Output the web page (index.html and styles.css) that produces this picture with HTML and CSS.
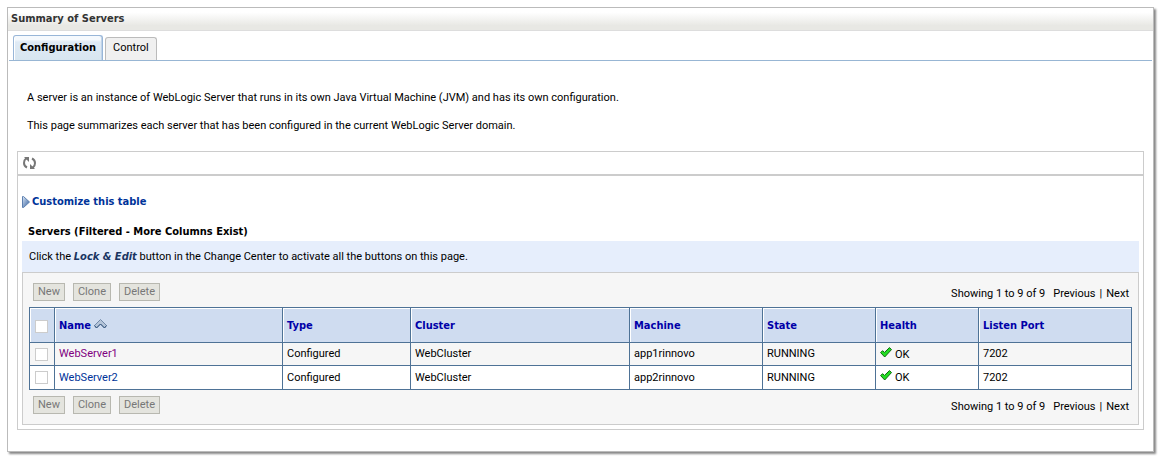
FILE: index.html
```html
<!DOCTYPE html>
<html lang="en">

<head>
    <meta charset="UTF-8">
    <meta name="viewport" content="width=device-width, initial-scale=1.0">
    <title>Summary of Servers</title>
    <link rel="stylesheet" href="styles.css">
</head>

<body>

    <div class="panel">
        <h1 class="panel-title">Summary of Servers</h1>

        <nav class="tabs">
            <a href="#" class="tab active">Configuration</a>
            <a href="#" class="tab">Control</a>
        </nav>

        <div class="intro">
            <p>A server is an instance of WebLogic Server that runs in its own Java Virtual Machine (JVM) and has its own configuration.</p>
            <p>This page summarizes each server that has been configured in the current WebLogic Server domain.</p>
        </div>

        <div class="content">
            <div class="toolbar">
                <button class="refresh" aria-label="Refresh">
                    <svg width="13" height="12" viewBox="0 0 13 12">
                        <path d="M4.500 1.500H3Q1 3 1 6T4 10.500" fill="none" stroke="#777" stroke-width="2" />
                        <path d="M1 0h5v5z" fill="#777" />
                        <path d="M8.500 10.500h1.500Q12 9 12 6T9 1.500" fill="none" stroke="#777" stroke-width="2" />
                        <path d="M12 12H7V7z" fill="#777" />
                    </svg>
                </button>
            </div>

            <div class="table-area">
                <a href="#" class="customize">
                    <svg width="8" height="12" viewBox="0 0 8 12">
                        <defs>
                            <linearGradient id="arrowFill" x1="0" y1="0" x2="1" y2="1">
                                <stop offset="0" stop-color="#dce8f6" />
                                <stop offset="1" stop-color="#2f5b9c" />
                            </linearGradient>
                        </defs>
                        <path d="M.5.5h1l6 5.500-6 5.500h-1z" fill="url(#arrowFill)" stroke="#5d80b0" />
                    </svg>
                    Customize this table
                </a>

                <h2 class="table-title">Servers (Filtered - More Columns Exist)</h2>
                <p class="hint">Click the <em>Lock &amp; Edit</em> button in the Change Center to activate all the buttons on this page.</p>

                <div class="table-box">
                    <div class="controls">
                        <div class="buttons">
                            <button disabled>New</button>
                            <button disabled>Clone</button>
                            <button disabled>Delete</button>
                        </div>
                        <div class="paging">
                            <span>Showing 1 to 9 of 9</span>
                            <span class="prev">Previous</span>
                            <span>|</span>
                            <span>Next</span>
                        </div>
                    </div>

                    <table class="servers">
                        <colgroup>
                            <col class="col-check">
                            <col class="col-name">
                            <col class="col-type">
                            <col class="col-cluster">
                            <col class="col-machine">
                            <col class="col-state">
                            <col class="col-health">
                            <col class="col-port">
                        </colgroup>
                        <thead>
                            <tr>
                                <th class="check"><input type="checkbox" aria-label="Select all servers"></th>
                                <th>Name
                                    <svg class="sort" width="13" height="10" viewBox="0 0 13 10">
                                        <path d="M.5 6.500l6-6 6 6-2 2.500-4-4-4 4z" fill="#b4c4d8" stroke="#7189a8" />
                                        <path d="M.5 6.500l2 2.500 4-4 4 4 2-2.500" fill="none" stroke="#33557f" />
                                    </svg>
                                </th>
                                <th>Type</th>
                                <th>Cluster</th>
                                <th>Machine</th>
                                <th>State</th>
                                <th>Health</th>
                                <th>Listen Port</th>
                            </tr>
                        </thead>
                        <tbody>
                            <tr>
                                <td class="check"><input type="checkbox" aria-label="Select WebServer1"></td>
                                <td><a href="#" class="seen">WebServer1</a></td>
                                <td>Configured</td>
                                <td>WebCluster</td>
                                <td>app1rinnovo</td>
                                <td>RUNNING</td>
                                <td><svg class="ok" width="12" height="11" viewBox="0 0 12 11">
                                        <path d="M.6 5.600l1.900-1.900 2 1.700L9.500.6l2 2L4.700 10z" fill="#22dd22" stroke="#0b6b0b" />
                                    </svg>OK</td>
                                <td>7202</td>
                            </tr>
                            <tr>
                                <td class="check"><input type="checkbox" aria-label="Select WebServer2"></td>
                                <td><a href="#">WebServer2</a></td>
                                <td>Configured</td>
                                <td>WebCluster</td>
                                <td>app2rinnovo</td>
                                <td>RUNNING</td>
                                <td><svg class="ok" width="12" height="11" viewBox="0 0 12 11">
                                        <path d="M.6 5.600l1.900-1.900 2 1.700L9.500.6l2 2L4.700 10z" fill="#22dd22" stroke="#0b6b0b" />
                                    </svg>OK</td>
                                <td>7202</td>
                            </tr>
                        </tbody>
                    </table>

                    <div class="controls bottom">
                        <div class="buttons">
                            <button disabled>New</button>
                            <button disabled>Clone</button>
                            <button disabled>Delete</button>
                        </div>
                        <div class="paging">
                            <span>Showing 1 to 9 of 9</span>
                            <span class="prev">Previous</span>
                            <span>|</span>
                            <span>Next</span>
                        </div>
                    </div>
                </div>
            </div>
        </div>
    </div>

</body>

</html>
```
FILE: styles.css
```css
* {
    margin: 0;
    padding: 0;
    box-sizing: border-box;
}

body {
    padding: 7px 5px 5px 7px;
    background: #fff;
    color: #000;
    font-family: Tahoma, Roboto, sans-serif;
    font-size: 11px;
    line-height: 14px;
}

h1,
h2,
th,
em,
.customize,
.tab.active {
    font-family: Tahoma, 'DejaVu Sans Condensed', 'DejaVu Sans', sans-serif;
    font-size: 11px;
    font-weight: bold;
}

a {
    color: #003399;
    text-decoration: none;
}

.panel {
    border: 1px solid #bbb;
    background: #fff;
    box-shadow: 2px 2px 2px #888;
    padding-bottom: 21px;
}

.panel-title {
    height: 23px;
    padding: 4px 3px;
    border-bottom: 1px solid #ddd;
    background: linear-gradient(#fff 20%, #e8e8e4 80%);
    color: #333;
}

/* TABS */
.tabs {
    display: flex;
    align-items: flex-end;
    gap: 2px;
    height: 30px;
    margin: 0 1px;
    padding-left: 4px;
    border-bottom: 1px solid #98b6d4;
}

.tab {
    height: 23px;
    padding: 3px 7px;
    border: 1px solid #bbb;
    border-bottom: none;
    border-radius: 3px 3px 0 0;
    background: #f0f0f0;
    color: #000;
}

.tab.active {
    height: 25px;
    padding: 5px 6px;
    border-color: #98b6d8;
    background: linear-gradient(#f5f9fd 15%, #dfeaf5 25%, #d8e6f0);
    box-shadow: inset 1px 0 #fff, inset -1px 0 #c0d3e8;
}

.intro {
    padding: 30px 19px 18px;
}

.intro p + p {
    margin-top: 14px;
}

/* CONTENT */
.content {
    margin: 0 9px;
    border: 1px solid #ccc;
}

.toolbar {
    display: flex;
    align-items: center;
    height: 24px;
    padding-left: 5px;
    border-bottom: 2px solid #ccc;
}

.refresh {
    display: flex;
    border: none;
    background: none;
}

.table-area {
    padding: 19px 4px 4px;
}

.customize {
    display: flex;
    align-items: center;
    gap: 2px;
}

.table-title {
    margin: 16px 0 2px;
    padding-left: 6px;
}

.hint {
    padding: 9px 7px 8px;
    background: #e6eefc;
}

.hint em {
    color: #1a3562;
    line-height: 1;
}

.table-box {
    padding: 0 6px;
    border: 1px solid #ccc;
    background: #f6f6f6;
}

.controls {
    display: flex;
    justify-content: space-between;
    align-items: center;
    padding: 10px 3px 6px 4px;
}

.controls.bottom {
    padding: 6px 3px 10px 4px;
}

.buttons {
    display: flex;
    gap: 8px;
}

.buttons button {
    height: 18px;
    padding: 0 4px;
    border: 1px solid #b8b8b0;
    background: #e4e4de;
    color: #777;
    font-family: inherit;
    font-size: 11px;
    line-height: 14px;
}

.paging {
    display: flex;
    gap: 4px;
    padding-top: 3px;
}

.prev {
    margin-left: 4px;
}

/* TABLE */
.servers {
    width: 100%;
    table-layout: fixed;
    border-collapse: collapse;
    background: #fff;
}

.servers th,
.servers td {
    border: 1px solid #4e7296;
    padding-left: 4px;
    text-align: left;
    white-space: nowrap;
}

.servers th {
    height: 35px;
    padding-top: 2px;
    background: #cfdcf0;
    box-shadow: inset 1px 1px #fff;
    color: #0000a8;
}

.servers td {
    height: 24px;
}

.servers tbody tr:first-child {
    background: #f6f6f6;
}

.servers tbody tr:first-child td {
    height: 23px;
}

.servers .seen {
    color: #800080;
}

.check input {
    display: block;
    appearance: none;
    width: 13px;
    height: 13px;
    margin-left: 1px;
    border: 1px solid #ccc;
    background: #fff;
}

.ok {
    margin-right: 3px;
}

.col-check {
    width: 25px;
}

.col-name {
    width: 228px;
}

.col-type {
    width: 128px;
}

.col-cluster {
    width: 219px;
}

.col-machine {
    width: 133px;
}

.col-state {
    width: 113px;
}

.col-health {
    width: 103px;
}
```
